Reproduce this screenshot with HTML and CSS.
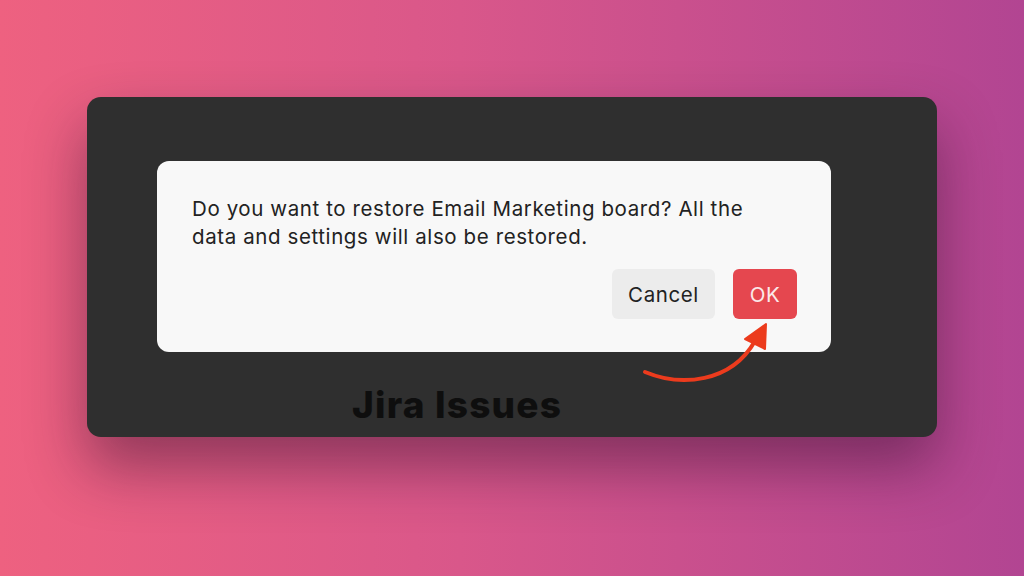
FILE: index.html
```html
<!DOCTYPE html>
<html lang="en">
<head>
    <meta charset="UTF-8">
    <meta name="viewport" content="width=device-width, initial-scale=1.0">
    <title>Restore board</title>
    <link rel="stylesheet" href="styles.css">
</head>
<body>
    <div class="stage">
        <div class="panel">
            <div class="dialog">
                <p class="message">Do you want to restore Email Marketing board? All the data and settings will also be restored.</p>
                <div class="actions">
                    <button class="btn cancel">Cancel</button>
                    <button class="btn ok">OK</button>
                </div>
            </div>
            <div class="board-title">Jira Issues</div>

            <!-- annotation arrow pointing at OK -->
            <svg class="pointer" width="150" height="80" viewBox="0 0 150 80">
                <path d="M4 51 C 40 66, 90 62, 114 20" fill="none" stroke="#ec3b1d" stroke-width="4" stroke-linecap="round"/>
                <path d="M104 18 L125 3 L124 28 Z" fill="#ec3b1d" stroke="#ec3b1d" stroke-width="2" stroke-linejoin="round"/>
            </svg>
        </div>
    </div>
</body>
</html>
```

FILE: styles.css
```css
body {
    margin: 0;
    font-family: Inter, "Noto Sans", sans-serif;
}
.stage {
    width: 1024px;
    height: 576px;
    background: linear-gradient(90deg, #ee6180 0%, #d9578a 45%, #b24592 100%);
    display: flex;
    justify-content: center;
    padding-top: 97px;
    box-sizing: border-box;
    overflow: hidden;
}
.panel {
    position: relative;
    width: 850px;
    height: 340px;
    background: #2f2f2f;
    border-radius: 14px;
    padding: 64px 0 0 70px;
    box-sizing: border-box;
    box-shadow: 0 30px 60px rgba(40, 10, 40, 0.45);
}
.dialog {
    width: 674px;
    background: #f8f8f8;
    border-radius: 12px;
    padding: 34px 34px 33px 35px;
    box-sizing: border-box;
}
.message {
    margin: 0;
    max-width: 580px;
    font-size: 20.5px;
    line-height: 28px;
    letter-spacing: 0.6px;
    color: #222;
}
.actions {
    display: flex;
    justify-content: flex-end;
    gap: 18px;
    margin-top: 18px;
}
.btn {
    height: 50px;
    border: none;
    border-radius: 6px;
    font-family: Inter, "Noto Sans", sans-serif;
    font-size: 20.5px;
    letter-spacing: 0.6px;
    padding: 0;
}
.cancel {
    background: #ececec;
    color: #222;
    width: 103px;
}
.ok {
    background: #e5474f;
    color: #fbe9ea;
    width: 64px;
}
.board-title {
    margin: 30px 0 0 195px;
    font-size: 37px;
    line-height: 45px;
    font-weight: 800;
    letter-spacing: 1.2px;
    color: #0e0e0e;
}
.pointer {
    position: absolute;
    left: 554px;
    top: 224px;
}
```
